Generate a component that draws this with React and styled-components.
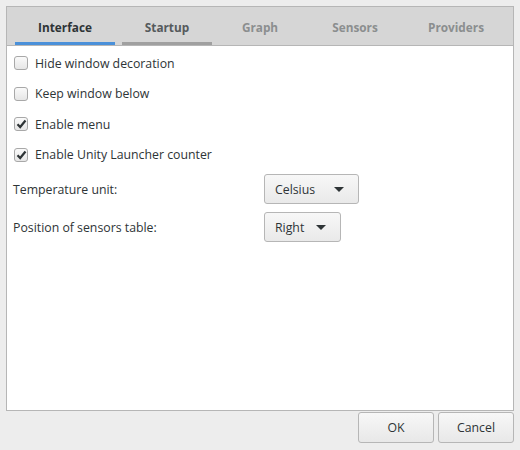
import React from 'react';
import styled, { createGlobalStyle } from 'styled-components';

const GlobalStyle = createGlobalStyle`
  html, body {
    margin: 0;
    padding: 0;
    background: #ededed;
  }
  body {
    font-family: "Open Sans", "DejaVu Sans", sans-serif;
    font-size: 12.3px;
    color: #2e3436;
  }
`

const Window = styled.div`
  width: 520px;
  height: 450px;
  box-sizing: border-box;
  padding: 6px 6px 6px 6px;
  display: flex;
  flex-direction: column;
`

const Notebook = styled.div`
  height: 405px;
  box-sizing: border-box;
  border: 1px solid #b6b6b6;
  display: flex;
  flex-direction: column;
  background: #fff;
`

const TabBar = styled.div`
  height: 38px;
  display: flex;
  align-items: stretch;
  gap: 7px;
  padding: 0 8px;
  background: #d6d6d6;
  border-bottom: 1px solid #b6b6b6;
`

const Tab = styled.div`
  min-width: ${p => p.$w}px;
  display: flex;
  align-items: center;
  justify-content: center;
  font-weight: 700;
  font-size: 11.8px;
  color: ${p => (p.$active ? '#2e3436' : p.$dim ? '#8b8e8f' : '#555a5c')};
  box-shadow: inset 0 -3px 0 ${p => (p.$active ? '#4a90d9' : p.$dim ? 'transparent' : '#a0a0a0')};
  padding-top: 2px;
  box-sizing: border-box;
`

const Page = styled.div`
  flex: 1;
  padding: 2px 6px;
  display: flex;
  flex-direction: column;
`

const CheckRow = styled.label`
  height: 30.5px;
  display: flex;
  align-items: center;
  gap: 7px;
`

const Box = styled.span`
  width: 12px;
  height: 12px;
  border: 1px solid #a8a8a8;
  border-radius: 3px;
  background: linear-gradient(#fafafa, #e6e6e6);
  display: flex;
  align-items: center;
  justify-content: center;
  margin-left: 1px;
`

const Grid = styled.div`
  display: grid;
  grid-template-columns: 251px auto;
  row-gap: 8px;
  margin-top: 4px;
  align-items: center;
`

const Combo = styled.div`
  justify-self: start;
  width: ${p => p.$w}px;
  height: 30px;
  box-sizing: border-box;
  border: 1px solid #b6b6b6;
  border-radius: 3px;
  background: linear-gradient(#f7f7f7, #e9e9e9);
  display: flex;
  align-items: center;
  justify-content: space-between;
  padding: 0 14px 0 10px;
`

const Arrow = styled.span`
  width: 0;
  height: 0;
  border-left: 5px solid transparent;
  border-right: 5px solid transparent;
  border-top: 5px solid #2e3436;
`

const Actions = styled.div`
  display: flex;
  justify-content: flex-end;
  gap: 4px;
  margin-top: 1px;
`

const Button = styled.div`
  width: 76px;
  height: 31px;
  box-sizing: border-box;
  border: 1px solid #b6b6b6;
  border-radius: 3px;
  background: linear-gradient(#f7f7f7, #e8e8e8);
  display: flex;
  align-items: center;
  justify-content: center;
`

const Check = () => (
  <svg width="11" height="10" viewBox="0 0 11 10">
    <path d="M1.5 5.2 L4.2 8 L9.5 1.5" fill="none" stroke="#2e3436" strokeWidth="2.2" />
  </svg>
);

const CheckItem = ({ checked, children }) => (
  <CheckRow>
    <Box>{checked && <Check />}</Box>
    {children}
  </CheckRow>
);

const App = () => (
  <Window>
    <GlobalStyle />
    <Notebook>
      <TabBar>
        <Tab $active $w={100}>Interface</Tab>
        <Tab $w={90}>Startup</Tab>
        <Tab $dim $w={82}>Graph</Tab>
        <Tab $dim $w={94}>Sensors</Tab>
        <Tab $dim $w={94}>Providers</Tab>
      </TabBar>
      <Page>
        <CheckItem>Hide window decoration</CheckItem>
        <CheckItem>Keep window below</CheckItem>
        <CheckItem checked>Enable menu</CheckItem>
        <CheckItem checked>Enable Unity Launcher counter</CheckItem>
        <Grid>
          <span>Temperature unit:</span>
          <Combo $w={95}>Celsius <Arrow /></Combo>
          <span>Position of sensors table:</span>
          <Combo $w={77}>Right <Arrow /></Combo>
        </Grid>
      </Page>
    </Notebook>
    <Actions>
      <Button>OK</Button>
      <Button>Cancel</Button>
    </Actions>
  </Window>
);

export default App;
